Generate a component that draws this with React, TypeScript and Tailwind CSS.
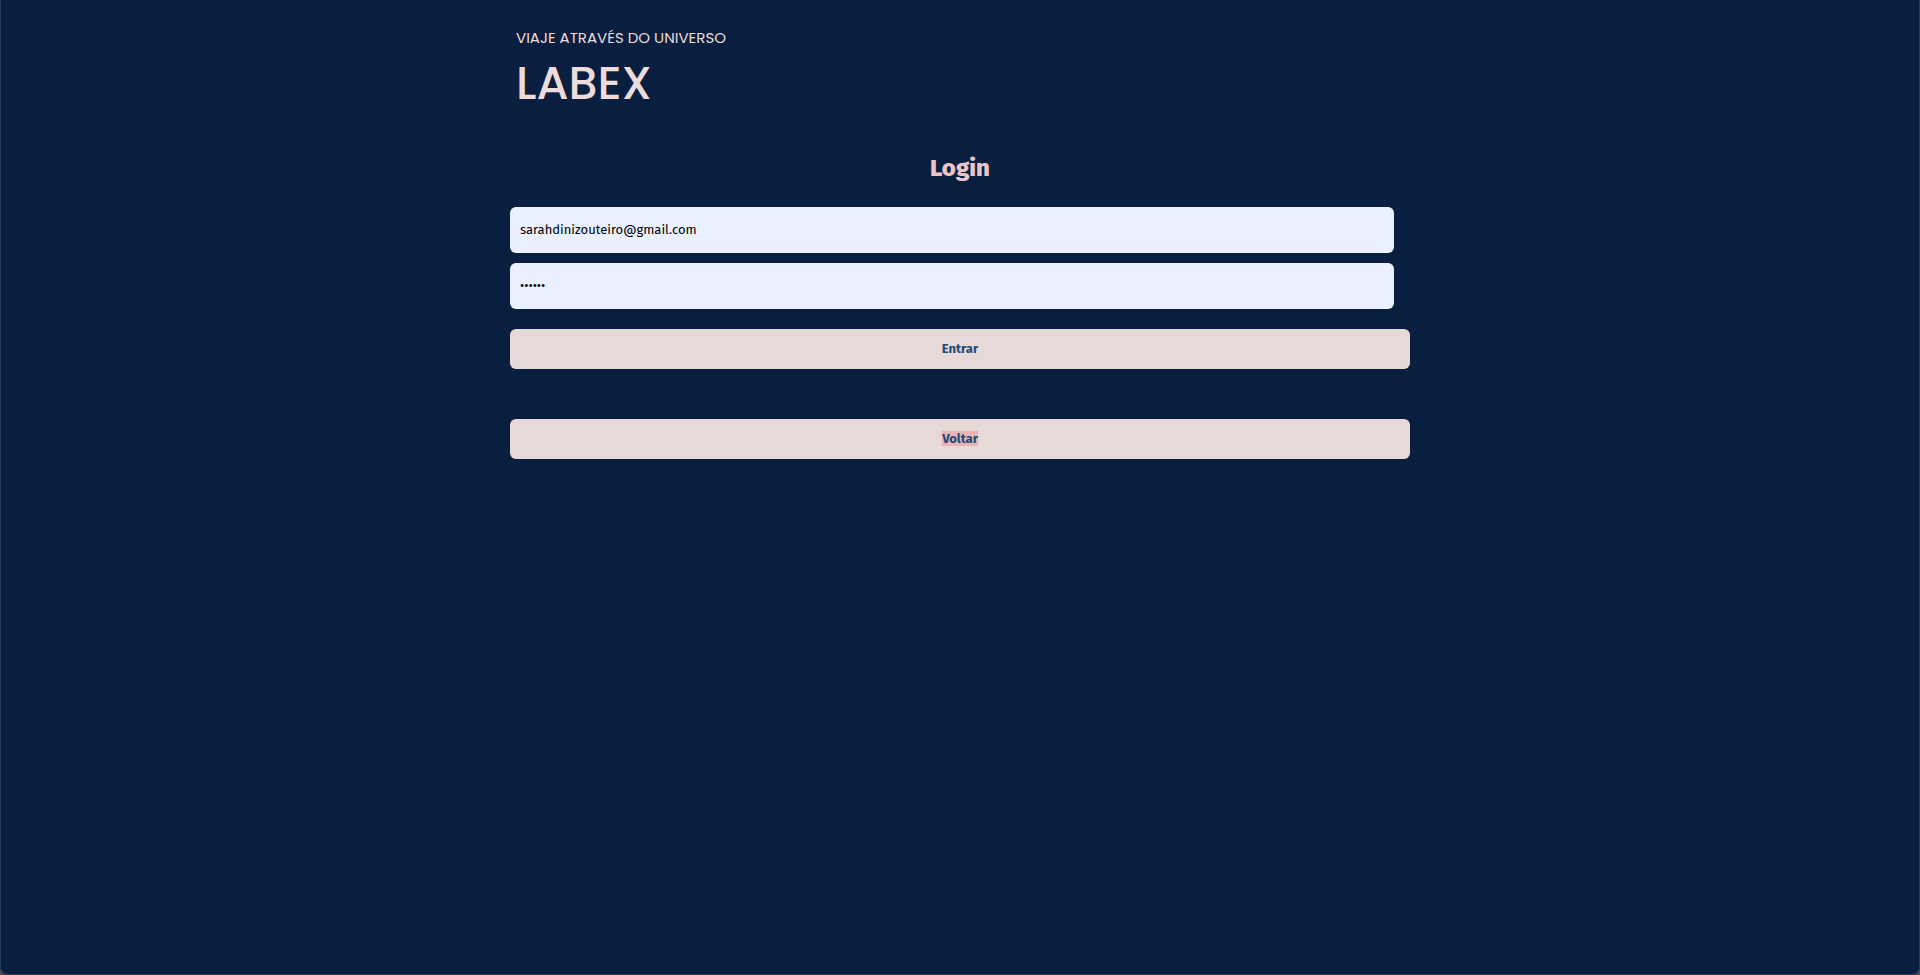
const field = "h-[46px] rounded-md bg-[#eaf0ff] px-[10px] pb-[2px] text-[13px] text-black outline-none"
const action = "h-10 rounded-md bg-[#e7d9d7] text-[13px] font-bold text-[#234a78]"

export default function App() {
  return (
    <div className="flex min-h-screen bg-[#4a4a55] font-['Fira_Sans','Noto_Sans',sans-serif]">
      <div className="grow rounded-b-lg border-x border-b border-[#243a5a] bg-[#0a1f3f]">
        <main className="mx-auto flex max-w-[900px] flex-col">
          <header className="flex flex-col items-start px-[6px] pt-7 font-['Poppins','Lato',sans-serif] text-[#ecdcdb]">
            <p className="text-[15px] leading-5">VIAJE ATRAVÉS DO UNIVERSO</p>
            <p className="mt-[7px] text-[46px] leading-[56px] font-medium">LABEX</p>
          </header>
          <h1 className="mt-[41px] text-center text-[24px] leading-8 font-extrabold text-[#e9c5ca]">Login</h1>
          <form className="mt-[23px] flex flex-col" onSubmit={(e) => e.preventDefault()}>
            <div className="flex flex-col gap-[10px] pr-4">
              <input type="email" aria-label="E-mail" defaultValue="sarahdinizouteiro@gmail.com" className={field} />
              <input type="password" aria-label="Senha" defaultValue="123456" className={field} />
            </div>
            <button type="submit" className={`mt-5 ${action}`}>
              Entrar
            </button>
          </form>
          <button type="button" className={`mt-[50px] ${action}`}>
            <span className="bg-[#e8b4b5]">Voltar</span>
          </button>
        </main>
      </div>
    </div>
  )
}
